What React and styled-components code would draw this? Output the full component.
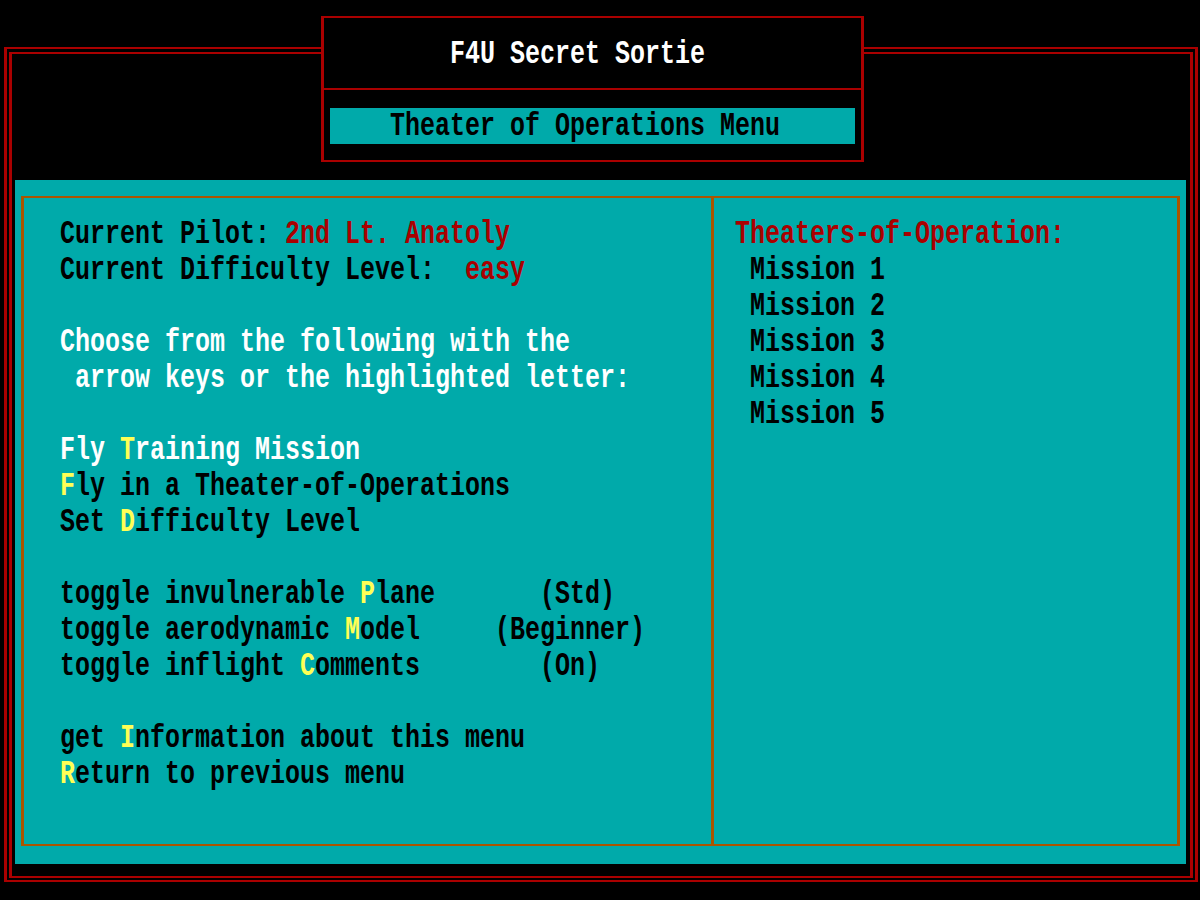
import React from 'react'
import styled, { createGlobalStyle } from 'styled-components'

const RED = '#aa0000'
const TEAL = '#00aaaa'
const BROWN = '#aa5500'
const YELLOW = '#ffff55'

const GlobalStyle = createGlobalStyle`
  html, body {
    margin: 0;
    padding: 0;
    background: #000;
  }
  body {
    font-family: "Liberation Mono", "DejaVu Sans Mono", monospace;
  }
`

const leftLines = [
  { parts: [['Current Pilot: '], ['2nd Lt. Anatoly', 'value']] },
  { parts: [['Current Difficulty Level:  '], ['easy', 'value']] },
  { parts: [] },
  { color: '#fff', parts: [['Choose from the following with the']] },
  { color: '#fff', parts: [[' arrow keys or the highlighted letter:']] },
  { parts: [] },
  { color: '#fff', parts: [['Fly '], ['T', 'key'], ['raining Mission']] },
  { parts: [['F', 'key'], ['ly in a Theater-of-Operations']] },
  { parts: [['Set '], ['D', 'key'], ['ifficulty Level']] },
  { parts: [] },
  { parts: [['toggle invulnerable '], ['P', 'key'], ['lane       (Std)']] },
  { parts: [['toggle aerodynamic '], ['M', 'key'], ['odel     (Beginner)']] },
  { parts: [['toggle inflight '], ['C', 'key'], ['omments        (On)']] },
  { parts: [] },
  { parts: [['get '], ['I', 'key'], ['nformation about this menu']] },
  { parts: [['R', 'key'], ['eturn to previous menu']] },
]

const missions = [1, 2, 3, 4, 5]

const TextLine = ({ color, children }) => (
  <Line>
    <Glyphs $color={color}>{children}</Glyphs>
  </Line>
)

const App = () => {
  return (
    <>
      <GlobalStyle />
      <Screen>
        <OuterFrame>
          <InnerFrame>
            <Panel>
              <MenuBox>
                <LeftColumn>
                  {leftLines.map((line, i) => (
                    <TextLine key={i} color={line.color}>
                      {line.parts.map(([text, kind], j) =>
                        kind === 'key' ? (
                          <Key key={j}>{text}</Key>
                        ) : kind === 'value' ? (
                          <Value key={j}>{text}</Value>
                        ) : (
                          <span key={j}>{text}</span>
                        )
                      )}
                    </TextLine>
                  ))}
                </LeftColumn>
                <RightColumn>
                  <TextLine color={RED}>Theaters-of-Operation:</TextLine>
                  {missions.map(n => (
                    <TextLine key={n}>{` Mission ${n}`}</TextLine>
                  ))}
                </RightColumn>
              </MenuBox>
            </Panel>
          </InnerFrame>
        </OuterFrame>

        <TitleBox>
          <TitleRow>
            <TextLine color="#fff">F4U Secret Sortie</TextLine>
          </TitleRow>
          <SubRow>
            <MenuBar>
              <TextLine>Theater of Operations Menu</TextLine>
            </MenuBar>
          </SubRow>
        </TitleBox>
      </Screen>
    </>
  )
}

export default App

const Screen = styled.div`
  position: relative;
  width: 1200px;
  height: 900px;
  box-sizing: border-box;
  padding: 47px 2px 0 4px;
  background: #000;
  overflow: hidden;
`

const OuterFrame = styled.div`
  box-sizing: border-box;
  width: 1194px;
  height: 835px;
  border: solid ${RED};
  border-width: 2px 3px;
  padding: 3px 2px 2px 2px;
  display: flex;
`

const InnerFrame = styled.div`
  flex: 1;
  box-sizing: border-box;
  border: solid ${RED};
  border-width: 2px 3px;
  padding: 126px 4px 12px 3px;
  display: flex;
`

const Panel = styled.div`
  flex: 1;
  background: ${TEAL};
  padding: 16px 6px 18px 6px;
  display: flex;
`

const MenuBox = styled.div`
  flex: 1;
  box-sizing: border-box;
  border: solid ${BROWN};
  border-width: 2px 3px;
  display: flex;
`

const LeftColumn = styled.div`
  width: 690px;
  box-sizing: border-box;
  padding: 18px 0 0 36px;
  border-right: 3px solid ${BROWN};
`

const RightColumn = styled.div`
  flex: 1;
  padding: 18px 0 0 21px;
`

const Line = styled.div`
  height: 36px;
  display: flex;
  align-items: center;
`

const Glyphs = styled.div`
  line-height: 25px;
  font-family: "Liberation Mono", "DejaVu Sans Mono", monospace;
  font-size: 25px;
  font-weight: 700;
  white-space: pre;
  color: ${props => props.$color || '#000'};
  transform: scaleY(1.36);
  transform-origin: 50% 55%;
`

const Key = styled.span`
  color: ${YELLOW};
`

const Value = styled.span`
  color: ${RED};
`

const TitleBox = styled.div`
  position: absolute;
  left: 321px;
  top: 16px;
  width: 543px;
  height: 146px;
  box-sizing: border-box;
  border: solid ${RED};
  border-width: 2px 3px;
  background: #000;
  display: flex;
  flex-direction: column;
`

const TitleRow = styled.div`
  height: 72px;
  box-sizing: border-box;
  padding: 18px 0 0 126px;
  border-bottom: 2px solid ${RED};
`

const SubRow = styled.div`
  flex: 1;
  padding: 18px 0 0 6px;
`

const MenuBar = styled.div`
  width: 525px;
  height: 36px;
  box-sizing: border-box;
  padding-left: 60px;
  background: ${TEAL};
`
